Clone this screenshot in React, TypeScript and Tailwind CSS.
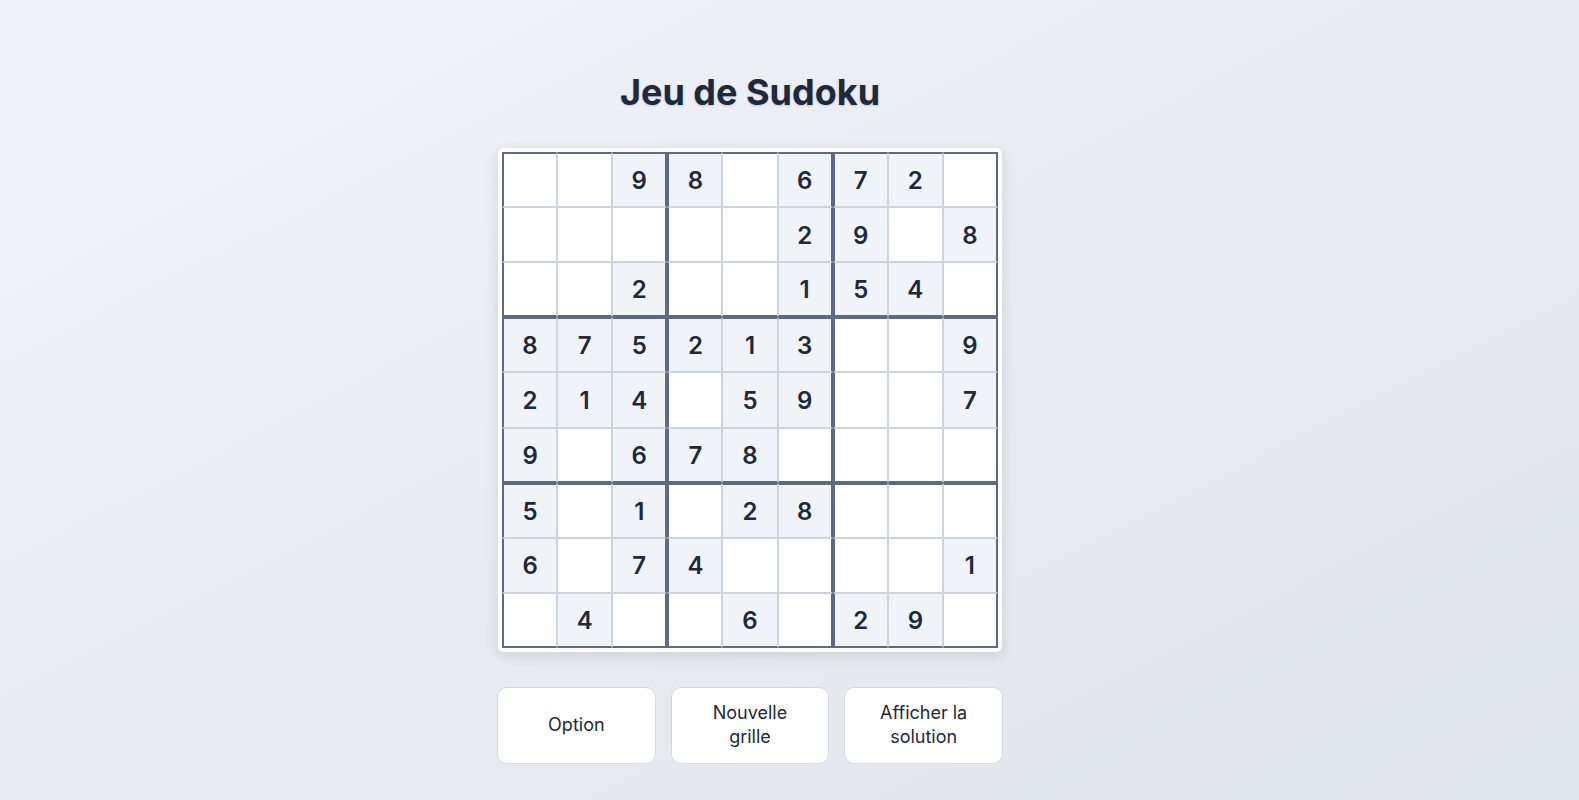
import React from 'react'

// 0 = empty cell
const puzzle: number[][] = [
  [0, 0, 9, 8, 0, 6, 7, 2, 0],
  [0, 0, 0, 0, 0, 2, 9, 0, 8],
  [0, 0, 2, 0, 0, 1, 5, 4, 0],
  [8, 7, 5, 2, 1, 3, 0, 0, 9],
  [2, 1, 4, 0, 5, 9, 0, 0, 7],
  [9, 0, 6, 7, 8, 0, 0, 0, 0],
  [5, 0, 1, 0, 2, 8, 0, 0, 0],
  [6, 0, 7, 4, 0, 0, 0, 0, 1],
  [0, 4, 0, 0, 6, 0, 2, 9, 0],
]

function cellBorders(row: number, col: number) {
  const cls = ['border border-[#cbd5e1]']
  if (col % 3 === 0) cls.push('border-l-2 border-l-[#5d6a82]')
  if (col % 3 === 2) cls.push('border-r-2 border-r-[#5d6a82]')
  if (row % 3 === 0) cls.push('border-t-2 border-t-[#5d6a82]')
  if (row % 3 === 2) cls.push('border-b-2 border-b-[#5d6a82]')
  return cls.join(' ')
}

function Board() {
  return (
    <div className="rounded-md bg-white p-1 shadow-[0_4px_14px_rgba(15,23,42,0.12)]">
      <div className="grid w-[496px] grid-cols-9">
        {puzzle.map((row, r) =>
          row.map((value, c) => (
            <div
              key={`${r}-${c}`}
              className={`${cellBorders(r, c)} flex aspect-square items-center justify-center pt-[2px] text-2xl font-semibold text-[#1e293b] ${
                value ? 'bg-[#f0f4f9]' : 'bg-white'
              }`}
            >
              {value || ''}
            </div>
          )),
        )}
      </div>
    </div>
  )
}

const actions = ['Option', 'Nouvelle grille', 'Afficher la solution']

export default function App() {
  return (
    <div className="min-h-screen bg-linear-to-br from-[#f0f3f7] to-[#e1e5ec] font-['Inter',sans-serif]">
      <div className="flex w-[1500px] flex-col items-center pt-[72px] pb-10">
        <h1 className="mb-9 text-4xl font-bold text-[#1e293b] [text-shadow:0_1px_2px_rgba(15,23,42,0.18)]">
          Jeu de Sudoku
        </h1>

        <Board />

        <div className="mt-[35px] grid w-[506px] grid-cols-3 gap-[15px]">
          {actions.map(label => (
            <button
              key={label}
              className="flex h-[77px] items-center justify-center rounded-[10px] border border-[#d3dae4] bg-white px-6 text-center text-lg leading-6 text-[#1e293b]"
            >
              {label}
            </button>
          ))}
        </div>
      </div>
    </div>
  )
}
